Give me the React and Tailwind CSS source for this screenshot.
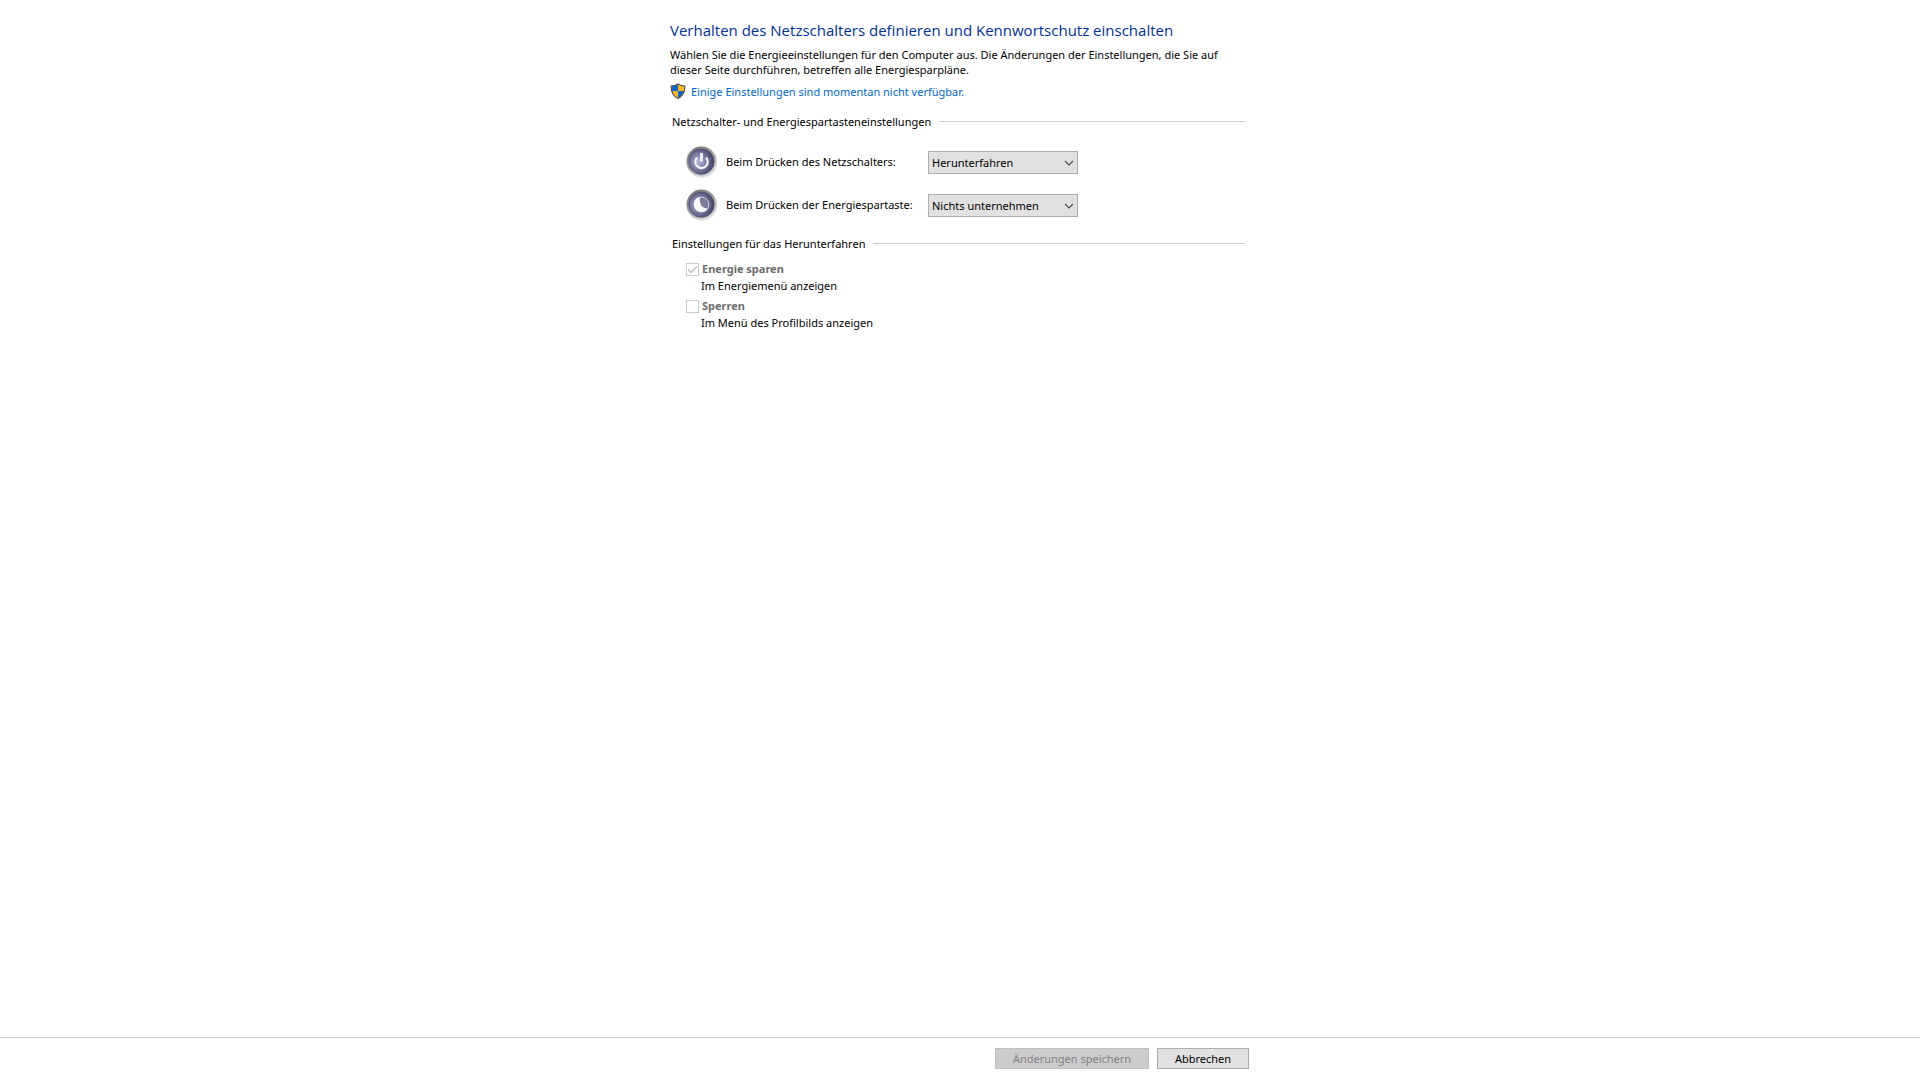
function ShieldIcon() {
  return (
    <svg className="h-4 w-4 shrink-0" viewBox="0 0 16 16" aria-hidden="true">
      <defs>
        <clipPath id="shield">
          <path d="M8 1.2C6.2 2.5 4 3.1 1.4 3.1C1.3 8.5 3 12.6 8 15C13 12.6 14.7 8.5 14.6 3.1C12 3.1 9.8 2.5 8 1.2Z" />
        </clipPath>
      </defs>
      <g clipPath="url(#shield)">
        <path d="M0 0H8V8H0Z" fill="#0d68c8" />
        <path d="M8 0H16V8H8Z" fill="#fdb924" />
        <path d="M0 8H8V16H0Z" fill="#fdb924" />
        <path d="M8 8H16V16H8Z" fill="#0d68c8" />
      </g>
      <path
        d="M8 1C6.2 2.3 3.8 3 1.2 3C1 8.8 2.8 12.9 8 15.4C13.2 12.9 15 8.8 14.8 3C12.2 3 9.8 2.3 8 1Z"
        fill="none"
        stroke="#4b4b4b"
        strokeWidth="1.1"
      />
    </svg>
  );
}

function RoundIcon({ id, children }) {
  return (
    <svg className="h-8 w-8" viewBox="0 0 32 32" aria-hidden="true">
      <defs>
        <linearGradient id={`${id}-ring`} x1="0.2" y1="0.05" x2="0.75" y2="0.95">
          <stop offset="0" stopColor="#737376" />
          <stop offset="0.5" stopColor="#a2a2a6" />
          <stop offset="1" stopColor="#d6d6d9" />
        </linearGradient>
        <radialGradient id={`${id}-face`} cx="0.38" cy="0.5" r="0.64">
          <stop offset="0" stopColor="#b4b4d2" />
          <stop offset="0.45" stopColor="#7f7ea4" />
          <stop offset="1" stopColor="#403f63" />
        </radialGradient>
      </defs>
      <circle cx="16" cy="16.4" r="15.5" fill="#e6e6e8" />
      <circle cx="15.5" cy="15.5" r="15" fill={`url(#${id}-ring)`} />
      <circle cx="15.5" cy="15.7" r="12.6" fill={`url(#${id}-face)`} stroke="#4c4b6a" strokeWidth="0.8" />
      {children}
    </svg>
  );
}

function PowerIcon() {
  return (
    <RoundIcon id="power">
      <path d="M11 11.6A6.2 6.2 0 1 0 20 11.6" fill="none" stroke="#f4f4f8" strokeWidth="2.2" />
      <path d="M15.5 7V15.5" stroke="#f4f4f8" strokeWidth="2.8" />
    </RoundIcon>
  );
}

function SleepIcon() {
  return (
    <RoundIcon id="sleep">
      <circle cx="15.5" cy="15.5" r="7.4" fill="#7b7a99" stroke="#d4d4e0" strokeWidth="1" />
      <path d="M14 8C9.6 8.6 7.6 12.2 7.9 16C8.3 20.4 11.8 23.2 15.6 23.1C18.3 23 20.6 21.7 21.9 19.4C17 20.4 12.6 14.6 14 8Z" fill="#fafafc" />
    </RoundIcon>
  );
}

function SectionHeading({ children }) {
  return (
    <div className="flex h-4 items-center gap-2 pr-[5px] pl-0.5">
      <h2>{children}</h2>
      <span className="h-px flex-1 bg-[#cccccc]" />
    </div>
  );
}

function ActionRow({ id, icon, label, value }) {
  return (
    <div className="grid h-8 grid-cols-[32px_210px_150px] items-center">
      {icon}
      <label htmlFor={id} className="pb-0.5 pl-2">
        {label}
      </label>
      <div className="relative">
        <select
          id={id}
          defaultValue={value}
          className="block h-[23px] w-full appearance-none border border-[#adadad] bg-[#e1e1e1] pr-5 pl-[3px]"
        >
          <option>Nichts unternehmen</option>
          <option>Energie sparen</option>
          <option>Herunterfahren</option>
        </select>
        <svg
          className="pointer-events-none absolute top-2 right-1 h-2 w-[10px]"
          viewBox="0 0 10 8"
          fill="none"
          stroke="#505050"
          strokeWidth="1.2"
          aria-hidden="true"
        >
          <path d="M1 2L5 6L9 2" />
        </svg>
      </div>
    </div>
  );
}

function ShutdownOption({ id, label, description, checked }) {
  return (
    <div>
      <div className="flex h-[17px] items-center gap-[3px]">
        <span className="relative h-[13px] w-[13px]">
          <input
            id={id}
            type="checkbox"
            defaultChecked={checked}
            disabled
            aria-describedby={`${id}-text`}
            className="block h-[13px] w-[13px] appearance-none border border-[#cccccc] bg-white"
          />
          {checked && (
            <svg
              className="pointer-events-none absolute inset-0"
              viewBox="0 0 13 13"
              fill="none"
              stroke="#bcbcbc"
              strokeWidth="1.3"
              aria-hidden="true"
            >
              <path d="M2 6.5L5 9.5L11 3.5" />
            </svg>
          )}
        </span>
        <label htmlFor={id} className="pb-0.5 font-bold text-[#6d6d6d]">
          {label}
        </label>
      </div>
      <p id={`${id}-text`} className="h-[17px] pl-[15px]">
        {description}
      </p>
    </div>
  );
}

export default function App() {
  return (
    <div className="flex min-h-screen flex-col bg-white font-['Noto_Sans','Open_Sans',sans-serif] text-[11px] leading-[15px] text-black">
      <main className="mx-auto w-full max-w-[580px] flex-1 pt-5">
        <h1 className="font-['Open_Sans','Noto_Sans',sans-serif] text-[15px] leading-5 text-[#003399]">
          Verhalten des Netzschalters definieren und Kennwortschutz einschalten
        </h1>
        <p className="mt-[7px] pr-5">
          Wählen Sie die Energieeinstellungen für den Computer aus. Die Änderungen der Einstellungen, die Sie auf
          dieser Seite durchführen, betreffen alle Energiesparpläne.
        </p>
        <a href="#" className="mt-1.5 flex w-fit items-center gap-[5px] text-[#0066cc]">
          <ShieldIcon />
          Einige Einstellungen sind momentan nicht verfügbar.
        </a>

        <section className="mt-3.5">
          <SectionHeading>Netzschalter- und Energiespartasteneinstellungen</SectionHeading>
          <div className="mt-[17px] flex flex-col gap-[11px] pl-4">
            <ActionRow
              id="power-button"
              icon={<PowerIcon />}
              label="Beim Drücken des Netzschalters:"
              value="Herunterfahren"
            />
            <ActionRow
              id="sleep-button"
              icon={<SleepIcon />}
              label="Beim Drücken der Energiespartaste:"
              value="Nichts unternehmen"
            />
          </div>
        </section>

        <section className="mt-3.5">
          <SectionHeading>Einstellungen für das Herunterfahren</SectionHeading>
          <div className="mt-2.5 flex flex-col gap-[3px] pl-4">
            <ShutdownOption id="sleep" label="Energie sparen" description="Im Energiemenü anzeigen" checked />
            <ShutdownOption id="lock" label="Sperren" description="Im Menü des Profilbilds anzeigen" />
          </div>
        </section>
      </main>

      <footer className="border-t border-[#cccccc] pt-2.5 pb-[11px]">
        <div className="mx-auto flex w-full max-w-[580px] justify-end gap-2 pr-px">
          <button
            type="button"
            disabled
            className="h-[21px] w-[154px] border border-[#bfbfbf] bg-[#cccccc] leading-[19px] text-[#838383]"
          >
            Änderungen speichern
          </button>
          <button type="button" className="h-[21px] w-[92px] border border-[#adadad] bg-[#e1e1e1] leading-[19px]">
            Abbrechen
          </button>
        </div>
      </footer>
    </div>
  );
}
